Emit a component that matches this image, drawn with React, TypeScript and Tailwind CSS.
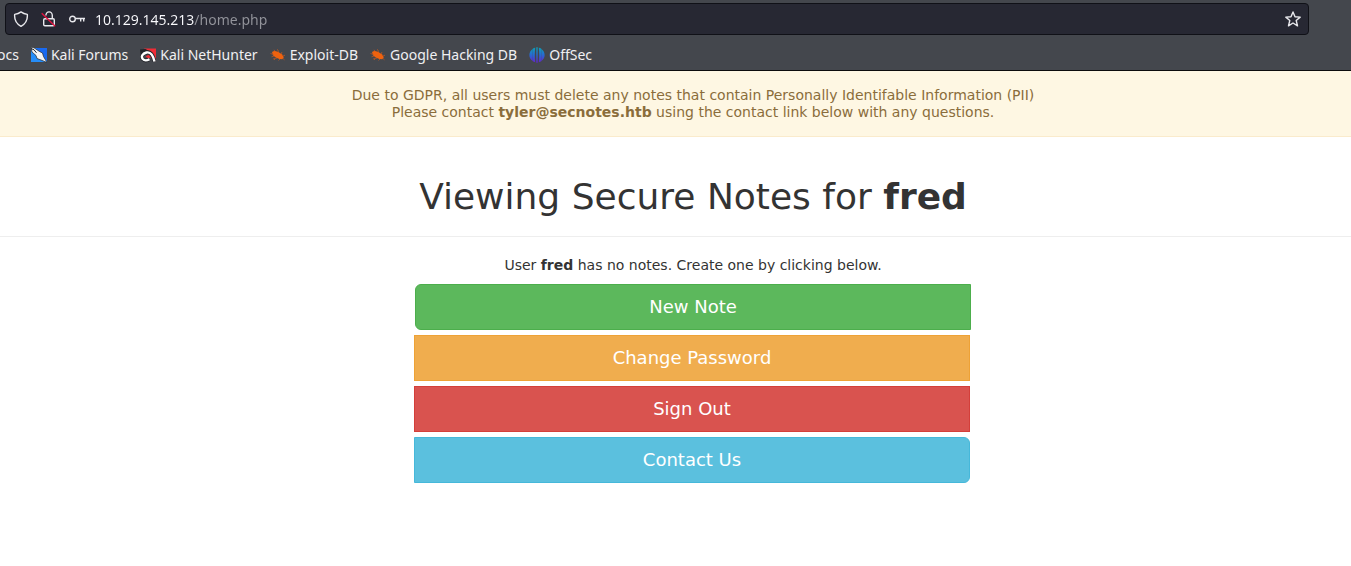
import React from 'react';

function ShieldIcon() {
  return (
    <svg width="16" height="16" viewBox="0 0 16 16" fill="none" stroke="#e9e9ed" strokeWidth="1.4" strokeLinejoin="round" aria-hidden="true">
      <path d="M8 .9c1.800 1.300 3.900 2.100 6.300 2.500.5 5-1.500 9.300-6.300 11.900C3.200 12.700 1.200 8.400 1.700 3.400 4.100 3 6.200 2.200 8 .9z" />
    </svg>
  );
}

function InsecureLockIcon() {
  return (
    <svg width="16" height="16" viewBox="0 0 16 16" fill="none" aria-hidden="true">
      <rect x="2.700" y="7.700" width="10.600" height="7" rx="1.200" stroke="#e9e9ed" strokeWidth="1.400" />
      <path d="M4.900 4.500a3.200 3.600 0 0 1 6.400 0v3" stroke="#e9e9ed" strokeWidth="1.400" />
      <path d="M.7 2.200l13.500 13" stroke="#e3123f" strokeWidth="1.400" />
    </svg>
  );
}

function KeyIcon() {
  return (
    <svg width="16" height="16" viewBox="0 0 16 16" fill="none" stroke="#e9e9ed" strokeWidth="1.400" aria-hidden="true">
      <circle cx="3.500" cy="8" r="2.800" />
      <path d="M6.300 7.500H16M11.700 7.500v3M14.700 7.500v3" />
    </svg>
  );
}

function StarIcon() {
  return (
    <svg width="16" height="16" viewBox="0 0 16 16" fill="none" stroke="#e9e9ed" strokeWidth="1.400" strokeLinejoin="round" aria-hidden="true">
      <path d="M8 .9l2 4.800 5.200.4-4 3.400 1.300 5.300L8 12l-4.500 2.800 1.300-5.300-4-3.400L6 5.700z" />
    </svg>
  );
}

function ForumsIcon() {
  return (
    <svg width="16" height="16" viewBox="0 0 16 16" aria-hidden="true">
      <path d="M0 1h16v14H0z" fill="#268df8" />
      <path d="M5 1h11v13z" fill="#1a6af0" />
      <path d="M0 0l3 .8L8.500 4.500l3 1.500 1 3.500 3.500 6-6-2.500L6 11.500 5 8.500 1 5z" fill="#f5f5f5" stroke="#23252b" strokeWidth=".7" />
      <path d="M0 1.500l3 1.300 2.500 3" fill="none" stroke="#23252b" strokeWidth="1" />
    </svg>
  );
}

function NetHunterIcon() {
  return (
    <svg width="16" height="16" viewBox="0 0 16 16" aria-hidden="true">
      <path d="M4 1.500H16V14.500z" fill="#f02c36" />
      <path d="M0 2.500L5.500 2 9 4 5 6 .5 7z" fill="#222328" />
      <path d="M14.500 14.500C13.300 9.500 10.800 4.500 6.500 5.500 2.300 6.600.8 9.500 2.800 12c1.600 1.800 4.500 1.400 6.700.2" fill="none" stroke="#24252b" strokeWidth="4" />
      <path d="M5.500 9.500l3-1.800 2.700 2.800-3 .8z" fill="#f02c36" />
      <path d="M14.500 14.500C13.300 9.500 10.800 4.500 6.500 5.500 2.300 6.600.8 9.500 2.800 12c1.600 1.800 4.500 1.400 6.700.2" fill="none" stroke="#fff" strokeWidth="2.400" />
    </svg>
  );
}

function BugIcon() {
  return (
    <svg width="16" height="16" viewBox="0 0 16 16" aria-hidden="true">
      <path d="M2 5l2.500-1.200L8.500 5l3.300 2.300 2 3-1.500 2-3-.3-3.500-1.500L3 8.500z" fill="#f0620f" />
      <path d="M5 4.500L4 2.800M8.500 5.200L8 3l-1-.5M11 7l1-2M13 9l2-.8M3.500 7.500L.5 6.500M4 9l-2.500.8M7 11l-3.500.8 1.500 1M10 12l-1.500 1.500M13 11.500l1.500 1.300" fill="none" stroke="#b95525" strokeWidth=".8" />
    </svg>
  );
}

function OffSecIcon() {
  return (
    <svg width="16" height="16" viewBox="0 0 16 16" aria-hidden="true">
      <defs>
        <linearGradient id="offsec" x1="0" y1="0" x2="0" y2="16" gradientUnits="userSpaceOnUse">
          <stop stopColor="#0ba3b4" />
          <stop offset=".5" stopColor="#2869d2" />
          <stop offset="1" stopColor="#6620c8" />
        </linearGradient>
      </defs>
      <path d="M3.300 2.200v11.600C-.6 11-.6 5 3.300 2.200zM3.500 2Q5 .9 6.200 .8 5.400 8 6.200 15.200 4.700 15 3.500 14zM7.300 .3h1.400v15.400H7.300zM9.800 .8Q11.300 .9 12.500 2v12q-1.200 1-2.700 1.200 .8-7.200 0-14.400zM12.700 2.200c3.900 2.800 3.900 8.800 0 11.600z" fill="url(#offsec)" />
    </svg>
  );
}

const bookmarks = [
  { label: 'Kali Forums', icon: <ForumsIcon /> },
  { label: 'Kali NetHunter', icon: <NetHunterIcon /> },
  { label: 'Exploit-DB', icon: <BugIcon /> },
  { label: 'Google Hacking DB', icon: <BugIcon /> },
  { label: 'OffSec', icon: <OffSecIcon /> },
];

const actions = [
  { label: 'New Note', style: 'rounded-l-md bg-[#5cb85c] border-[#4cae4c]' },
  { label: 'Change Password', style: '-ml-px mr-px bg-[#f0ad4e] border-[#eea236]' },
  { label: 'Sign Out', style: '-ml-px mr-px bg-[#d9534f] border-[#d43f3a]' },
  { label: 'Contact Us', style: '-ml-px mr-px rounded-r-md bg-[#5bc0de] border-[#46b8da]' },
];

export default function App() {
  return (
    <div className="min-h-screen overflow-x-hidden bg-white font-['DejaVu_Sans',sans-serif] text-sm text-[#333]">
      <header className="border-b border-[#0c0c0d] bg-[#44474d] pt-[3px] font-['Noto_Sans',sans-serif]">
        <div className="ml-[5px] mr-[42px] flex h-8 items-center rounded-[4px] border border-[#101117] bg-[#272833] px-[7px]">
          <button type="button" aria-label="Tracking protection"><ShieldIcon /></button>
          <button type="button" aria-label="Connection is not secure" className="ml-3"><InsecureLockIcon /></button>
          <button type="button" aria-label="Saved logins" className="ml-3"><KeyIcon /></button>
          <input
            type="text"
            aria-label="Address"
            defaultValue="10.129.145.213/home.php"
            className="ml-[10px] h-7 min-w-0 flex-1 bg-[linear-gradient(to_right,#fbfbfe_99px,#93949b_99px)] bg-clip-text text-sm text-transparent caret-white outline-none"
          />
          <button type="button" aria-label="Bookmark this page"><StarIcon /></button>
        </div>
        <nav aria-label="Bookmarks" className="flex h-[35px] items-center gap-3 pt-[5px] text-sm text-[#f0f0f2]">
          <a href="#docs" className="-ml-[3px] shrink-0 whitespace-nowrap">ocs</a>
          {bookmarks.map((item) => (
            <a key={item.label} href="#bookmark" className="flex shrink-0 items-center gap-1 whitespace-nowrap">
              {item.icon}
              {item.label}
            </a>
          ))}
        </nav>
      </header>

      <section className="border-b border-[#faebcc] bg-[#fef7e3] pb-[15px] pl-[35px] pt-4 text-center leading-[17px] text-[#8a6d3b]">
        <p>Due to GDPR, all users must delete any notes that contain Personally Identifable Information (PII)</p>
        <p>Please contact <b>tyler@secnotes.htb</b> using the contact link below with any questions.</p>
      </section>

      <div className="border-b border-[#eee] pb-[19px] pl-[35px] pt-10 text-center">
        <h1 className="text-4xl leading-[40px]">Viewing Secure Notes for <b>fred</b></h1>
      </div>

      <main className="pl-[35px] pt-[18px] text-center">
        <p className="leading-5">User <b>fred</b> has no notes. Create one by clicking below.</p>
        <div className="mx-auto mt-[9px] flex max-w-[556px] flex-col gap-[5px]">
          {actions.map((action) => (
            <a key={action.label} href="#action" className={`block border py-[10px] text-lg leading-6 text-white ${action.style}`}>
              {action.label}
            </a>
          ))}
        </div>
      </main>
    </div>
  );
}
